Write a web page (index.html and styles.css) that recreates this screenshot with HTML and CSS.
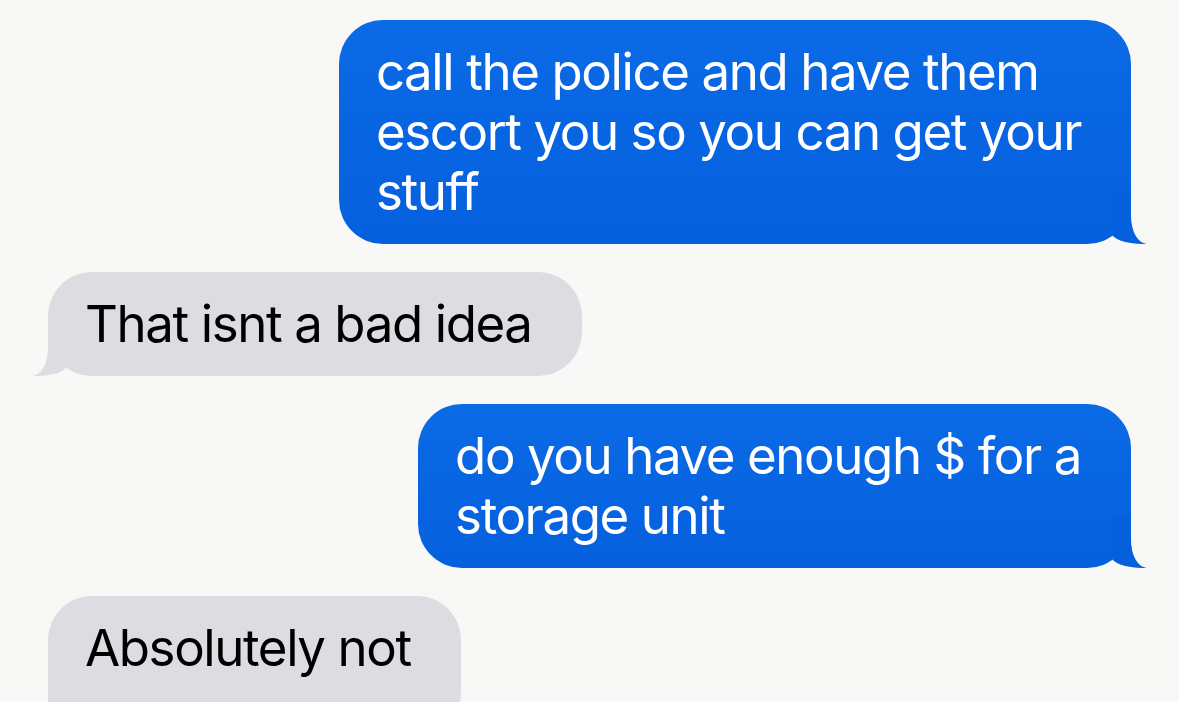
FILE: index.html
```html
<!DOCTYPE html>
<html lang="en">
<head>
    <meta charset="UTF-8">
    <meta name="viewport" content="width=device-width, initial-scale=1.0">
    <title>Messages</title>
    <link rel="stylesheet" href="styles.css">
</head>
<body>
    <div class="thread">
        <div class="msg sent tail">call the police and have them<br>escort you so you can get your<br>stuff</div>
        <div class="msg received tail">That isnt a bad idea</div>
        <div class="msg sent tail">do you have enough $ for a<br>storage unit</div>
        <div class="msg received tail">Absolutely not</div>
    </div>
</body>
</html>
```

FILE: styles.css
```css
html, body {
    margin: 0;
    padding: 0;
    overflow: hidden;
    background-color: #f8f8f6;
}

body {
    font-family: Inter, "Noto Sans", sans-serif;
}

.thread {
    display: flex;
    flex-direction: column;
    gap: 28px;
    padding: 20px 48px;
}

.msg {
    position: relative;
    padding: 22px 50px 22px 37px;
    border-radius: 44px;
    font-size: 51px;
    line-height: 60px;
    letter-spacing: -1.4px;
}

/* last bubble runs past the bottom of the window */
.msg:last-child {
    padding-bottom: 60px;
}

.sent {
    align-self: flex-end;
    color: #fff;
    background: linear-gradient(#0b6ae6, #0560de);
}

.received {
    align-self: flex-start;
    color: #000;
    background-color: #dcdce1;
}

/* Bubble tails */
.tail::before,
.tail::after {
    content: "";
    position: absolute;
    bottom: 0;
    height: 50px;
}

.sent.tail::before {
    right: -16px;
    width: 36px;
    background-color: #0560de;
    border-bottom-left-radius: 32px 12px;
}

.sent.tail::after {
    right: -40px;
    width: 40px;
    background-color: #f8f8f6;
    border-bottom-left-radius: 16px 28px;
}

.received.tail::before {
    left: -16px;
    width: 36px;
    background-color: #dcdce1;
    border-bottom-right-radius: 32px 12px;
}

.received.tail::after {
    left: -40px;
    width: 40px;
    background-color: #f8f8f6;
    border-bottom-right-radius: 16px 28px;
}
```
